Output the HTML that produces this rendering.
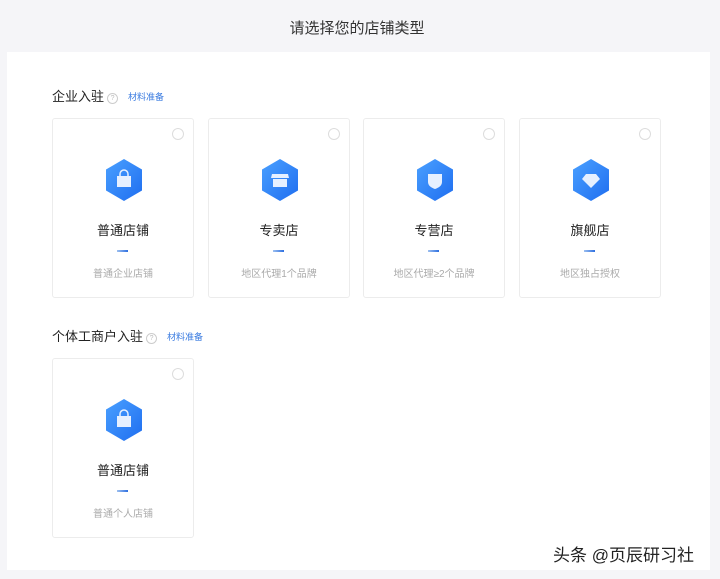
<!DOCTYPE html>
<html><head><meta charset="utf-8"><style>
body{margin:0;width:720px;height:579px;background:#f5f5f8;font-family:"Liberation Sans","Noto Sans CJK SC",sans-serif;position:relative;overflow:hidden}
.title{position:absolute;top:17px;left:0;width:714px;text-align:center;font-size:15px;color:#333}
.panel{position:absolute;left:7px;top:52px;width:703px;height:518px;background:#fff}
.sec{position:absolute;font-size:13px;color:#222}
.sec .q{display:inline-block;width:9px;height:9px;border:1px solid #ccc;border-radius:50%;font-size:7px;color:#bbb;text-align:center;line-height:9px;vertical-align:1px;margin-left:3px}
.sec .m{font-size:9px;color:#3a7be0;margin-left:10px;vertical-align:1px}
.card{position:absolute;width:140px;height:178px;border:1px solid #ececec;border-radius:3px;background:#fff}
.card .r{position:absolute;right:9px;top:9px;width:10px;height:10px;border:1px solid #ddd;border-radius:50%}
.card svg{position:absolute;left:51px;top:39px}
.card .n{position:absolute;top:101px;width:100%;text-align:center;font-size:13px;color:#222}
.card .d{position:absolute;top:131px;left:64px;width:11px;height:2px;background:linear-gradient(90deg,#9ec0f0,#2d6fe0)}
.card .s{position:absolute;top:146px;width:100%;text-align:center;font-size:10px;color:#aaa}
.wm{position:absolute;left:553px;top:541px;font-size:17px;color:#222}
</style></head><body>
<div class="title">请选择您的店铺类型</div>
<div class="panel"></div>
<div class="sec" style="left:52px;top:86px">企业入驻<span class="q">?</span><span class="m">材料准备</span></div>
<div class="sec" style="left:52px;top:326px">个体工商户入驻<span class="q">?</span><span class="m">材料准备</span></div>

<svg width="0" height="0" style="position:absolute"><defs><linearGradient id="g" x1="0" y1="0" x2="1" y2="1"><stop offset="0" stop-color="#4aa0ff"/><stop offset="1" stop-color="#1f6ef0"/></linearGradient></defs></svg>

<div class="card" style="left:52px;top:118px"><div class="r"></div>
<svg width="40" height="44" viewBox="0 0 40 44"><path d="M20 1 L38 11.5 L38 32.5 L20 43 L2 32.5 L2 11.5Z" fill="url(#g)"/><path d="M13 18h14v11h-14z" fill="#e6f0ff"/><path d="M16 18v-2a4 4 0 0 1 8 0v2" stroke="#e6f0ff" stroke-width="1.5" fill="none"/></svg>
<div class="n">普通店铺</div><div class="d"></div><div class="s">普通企业店铺</div></div>

<div class="card" style="left:208px;top:118px"><div class="r"></div>
<svg width="40" height="44" viewBox="0 0 40 44"><path d="M20 1 L38 11.5 L38 32.5 L20 43 L2 32.5 L2 11.5Z" fill="url(#g)"/><path d="M12 16h16l1 4h-18z" fill="#e6f0ff"/><path d="M13 21h14v8h-14z" fill="#e6f0ff"/></svg>
<div class="n">专卖店</div><div class="d"></div><div class="s">地区代理1个品牌</div></div>

<div class="card" style="left:363px;top:118px"><div class="r"></div>
<svg width="40" height="44" viewBox="0 0 40 44"><path d="M20 1 L38 11.5 L38 32.5 L20 43 L2 32.5 L2 11.5Z" fill="url(#g)"/><path d="M13 16h14v8c0 4-4 6-7 7c-3-1-7-3-7-7z" fill="#e6f0ff"/></svg>
<div class="n">专营店</div><div class="d"></div><div class="s">地区代理≥2个品牌</div></div>

<div class="card" style="left:519px;top:118px"><div class="r"></div>
<svg width="40" height="44" viewBox="0 0 40 44"><path d="M20 1 L38 11.5 L38 32.5 L20 43 L2 32.5 L2 11.5Z" fill="url(#g)"/><path d="M15 16h10l4 5l-9 9l-9-9z" fill="#e6f0ff"/></svg>
<div class="n">旗舰店</div><div class="d"></div><div class="s">地区独占授权</div></div>

<div class="card" style="left:52px;top:358px"><div class="r"></div>
<svg width="40" height="44" viewBox="0 0 40 44"><path d="M20 1 L38 11.5 L38 32.5 L20 43 L2 32.5 L2 11.5Z" fill="url(#g)"/><path d="M13 18h14v11h-14z" fill="#e6f0ff"/><path d="M16 18v-2a4 4 0 0 1 8 0v2" stroke="#e6f0ff" stroke-width="1.5" fill="none"/></svg>
<div class="n">普通店铺</div><div class="d"></div><div class="s">普通个人店铺</div></div>

<div class="wm">头条 @页辰研习社</div>
</body></html>
